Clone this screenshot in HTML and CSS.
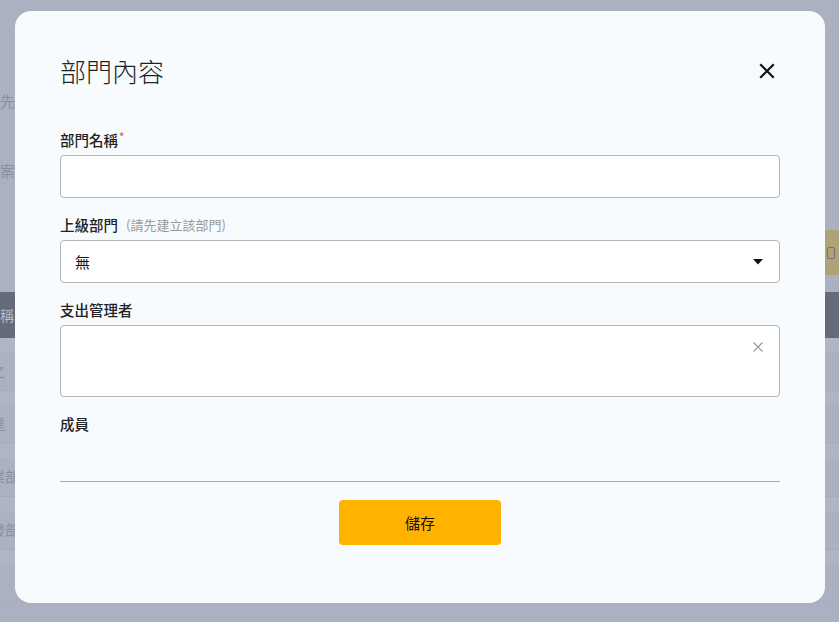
FILE: index.html
```html
<!DOCTYPE html>
<html lang="zh-Hant">
<head>
    <meta charset="utf-8">
    <title>部門內容</title>
    <link rel="stylesheet" href="styles.css">
</head>
<body>
    <div class="page">
        <p class="bg-hint">先</p>
        <p class="bg-hint second">案</p>
        <div class="bg-toolbar">
            <button class="bg-btn"><span class="bg-btn-icon"></span></button>
        </div>
        <div class="bg-table">
            <div class="bg-head">稱</div>
            <div class="bg-row">之</div>
            <div class="bg-row">達</div>
            <div class="bg-row">業部</div>
            <div class="bg-row">發部</div>
            <div class="bg-row"></div>
        </div>
    </div>

    <div class="overlay">
        <div class="modal">
            <div class="modal-header">
                <h2>部門內容</h2>
                <button class="close-btn" aria-label="close">
                    <svg width="16" height="16" viewBox="0 0 16 16">
                        <path d="M2 2 L14 14 M14 2 L2 14" stroke="#111" stroke-width="2.2" stroke-linecap="square"/>
                    </svg>
                </button>
            </div>

            <div class="field">
                <label>部門名稱<span class="required">*</span></label>
                <input type="text" class="text-input">
            </div>

            <div class="field">
                <label>上級部門<span class="hint">(請先建立該部門)</span></label>
                <div class="select-box">
                    <span>無</span>
                    <svg width="10" height="6" viewBox="0 0 10 6"><path d="M0 0 L10 0 L5 5.5 Z" fill="#111"/></svg>
                </div>
            </div>

            <div class="field">
                <label>支出管理者</label>
                <div class="multi-box">
                    <svg class="clear-icon" width="10" height="10" viewBox="0 0 10 10">
                        <path d="M0.5 0.5 L9.5 9.5 M9.5 0.5 L0.5 9.5" stroke="#999" stroke-width="1.1"/>
                    </svg>
                </div>
            </div>

            <div class="field field-members">
                <label>成員</label>
                <div class="members"></div>
            </div>

            <div class="actions">
                <button class="save-btn">儲存</button>
            </div>
        </div>
    </div>
</body>
</html>
```

FILE: styles.css
```css
body {
    margin: 0;
    font-family: "Noto Sans CJK TC", "Noto Sans", sans-serif;
    background-color: #abb1c0;
    overflow: hidden;
}

/* page behind the dialog (already dimmed) */
.page {
    width: 839px;
    height: 622px;
    padding-top: 88px;
    box-sizing: border-box;
    color: #8a90a0;
    overflow: hidden;
}

.bg-hint {
    margin: 0;
    font-size: 15px;
    line-height: 26px;
}

.bg-hint.second {
    margin-top: 44px;
}

.bg-toolbar {
    display: flex;
    justify-content: flex-end;
    margin-top: 46px;
}

.bg-btn {
    display: flex;
    align-items: center;
    height: 45px;
    width: 14px;
    padding: 0 0 0 2px;
    border: none;
    background: #b0a276;
}

.bg-btn-icon {
    width: 6px;
    height: 10px;
    border: 1.5px solid #6b6f7a;
    border-radius: 2px;
}

.bg-table {
    margin-top: 17px;
}

.bg-head {
    height: 46px;
    line-height: 46px;
    background: #656b7a;
    color: #b9bdc8;
    font-size: 14px;
}

.bg-row {
    height: 52px;
    line-height: 64px;
    border-bottom: 1px solid #a6acbb;
    background: linear-gradient(#b0b5c3 0, #b0b5c3 14px, #abb1c0 14px);
    font-size: 14px;
    margin-left: -9px;
}

/* dialog */
.overlay {
    position: fixed;
    top: 0;
    left: 0;
    right: 0;
    bottom: 0;
}

.modal {
    margin: 11px 0 0 15px;
    width: 810px;
    height: 592px;
    box-sizing: border-box;
    padding: 43px 45px 0 45px;
    background: #f7fbfe;
    border-radius: 16px;
}

.modal-header {
    display: flex;
    justify-content: space-between;
    align-items: center;
    height: 34px;
    margin-bottom: 41px;
}

.modal-header h2 {
    margin: 0;
    font-size: 26px;
    font-weight: 200;
    line-height: 34px;
    color: #222;
}

.close-btn {
    border: none;
    background: none;
    padding: 0;
    margin-right: 5px;
    width: 16px;
    height: 16px;
    cursor: pointer;
}

.close-btn svg {
    display: block;
}

.field {
    margin-bottom: 16px;
}

.field label {
    display: flex;
    align-items: center;
    height: 20px;
    font-size: 14.5px;
    font-weight: 500;
    color: #222;
    margin-bottom: 6px;
}

.required {
    align-self: flex-start;
    color: #f0532b;
    font-size: 11px;
    line-height: 14px;
    margin-left: 1px;
}

.hint {
    font-size: 13px;
    font-weight: 400;
    color: #999;
    margin-left: 8px;
}

.text-input {
    display: block;
    width: 100%;
    height: 43px;
    box-sizing: border-box;
    border: 1px solid #b5b5b5;
    border-radius: 4px;
    background: #fff;
}

.select-box {
    display: flex;
    justify-content: space-between;
    align-items: center;
    height: 43px;
    box-sizing: border-box;
    padding: 0 16px 0 14px;
    border: 1px solid #b5b5b5;
    border-radius: 4px;
    background: #fff;
    font-size: 15px;
    color: #111;
}

.multi-box {
    position: relative;
    height: 72px;
    box-sizing: border-box;
    border: 1px solid #b5b5b5;
    border-radius: 4px;
    background: #fff;
}

.clear-icon {
    position: absolute;
    top: 16px;
    right: 16px;
}

.field-members {
    margin-bottom: 0;
}

.members {
    height: 42px;
    border-bottom: 1px solid #aaa;
}

.actions {
    display: flex;
    justify-content: center;
    margin-top: 18px;
}

.save-btn {
    width: 162px;
    height: 45px;
    border: none;
    border-radius: 4px;
    background: #ffb300;
    color: #111;
    font-family: inherit;
    font-size: 15px;
    cursor: pointer;
}
```
